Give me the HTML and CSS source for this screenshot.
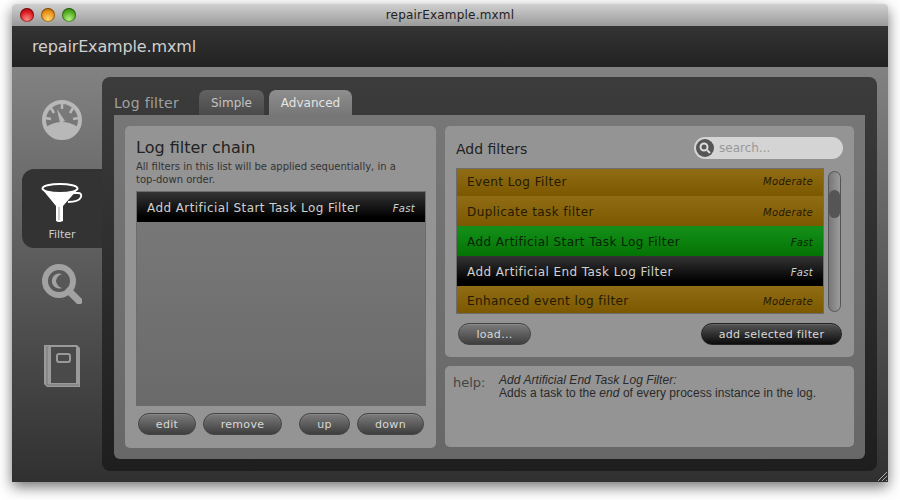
FILE: index.html
```html
<!DOCTYPE html>
<html lang="en">
<head>
    <meta charset="UTF-8">
    <title>repairExample.mxml</title>
    <link rel="stylesheet" href="styles.css">
</head>
<body>
    <div class="window">
        <div class="titlebar">
            <div class="lights">
                <span class="light red"></span>
                <span class="light orange"></span>
                <span class="light green"></span>
            </div>
            <div class="window-title">repairExample.mxml</div>
        </div>
        <div class="header">repairExample.mxml</div>
        <div class="main">
            <div class="sidebar">
                <div class="nav-item nav-gauge">
                    <svg width="40" height="40" viewBox="0 0 40 40">
                        <circle cx="20" cy="20" r="18" fill="none" stroke="#b8b8b8" stroke-width="4"/>
                        <path d="M4 27 Q20 17 36 27 Q31 38 20 38 Q9 38 4 27Z" fill="#b8b8b8"/>
                        <path d="M20 3V9M9 8l3 5M31 8l-3 5M3 18l6 1M37 18l-6 1" stroke="#b8b8b8" stroke-width="2.5"/>
                        <path d="M15 9 L23 21 L18 23Z" fill="#b8b8b8"/>
                    </svg>
                </div>
                <div class="nav-item nav-filter">
                    <svg width="42" height="40" viewBox="0 0 42 40">
                        <path d="M30 10 H37 Q41 10 40 14 Q38 19 27 19" fill="none" stroke="#fff" stroke-width="2"/>
                        <path d="M1 6 L15 23 V38 Q18 40 22 38 V23 L37 6 Q18 14 1 6Z" fill="#fff"/>
                        <ellipse cx="19" cy="5.500" rx="17.500" ry="4.500" fill="#333" stroke="#fff" stroke-width="2"/>
                        <path d="M18 24V37" stroke="#bbb" stroke-width="1.500"/>
                    </svg>
                    <span class="nav-label">Filter</span>
                </div>
                <div class="nav-item nav-search">
                    <svg width="40" height="40" viewBox="0 0 40 40">
                        <circle cx="17" cy="17" r="14" fill="none" stroke="#a2a2a2" stroke-width="6"/>
                        <path d="M20 10 A7.500 7.500 0 1 0 20 24 A9 9 0 0 1 14 17 A9 9 0 0 1 20 10Z" fill="#a2a2a2"/>
                        <path d="M27 27 L37 37" stroke="#a2a2a2" stroke-width="7" stroke-linecap="round"/>
                    </svg>
                </div>
                <div class="nav-item nav-book">
                    <svg width="36" height="42" viewBox="0 0 36 42">
                        <path d="M0 0 H33 L36 3 V42 H3 L0 39Z" fill="#9a9a9a"/>
                        <rect x="7" y="2" width="25" height="36" fill="#4a4a4a"/>
                        <path d="M3 1V40H35" fill="none" stroke="#777" stroke-width="1"/>
                        <rect x="13" y="9" width="13" height="8" rx="2" fill="#4a4a4a" stroke="#9a9a9a" stroke-width="2"/>
                    </svg>
                </div>
            </div>
            <div class="panel">
                <div class="tabs">
                    <span class="tabs-label">Log filter</span>
                    <span class="tab tab-simple">Simple</span>
                    <span class="tab tab-active">Advanced</span>
                </div>
                <div class="tab-content">
                    <div class="card chain-card">
                        <h2>Log filter chain</h2>
                        <p class="sub">All filters in this list will be applied sequentially, in a top-down order.</p>
                        <div class="list chain-list">
                            <div class="row row-black"><span>Add Artificial Start Task Log Filter</span><em>Fast</em></div>
                        </div>
                        <div class="buttons chain-buttons">
                            <button class="btn btn-edit">edit</button>
                            <button class="btn btn-remove">remove</button>
                            <button class="btn btn-up">up</button>
                            <button class="btn btn-down">down</button>
                        </div>
                    </div>
                    <div class="right-col">
                        <div class="card add-card">
                            <div class="add-head">
                                <h3>Add filters</h3>
                                <div class="search">
                                    <span class="search-icon">
                                        <svg width="14" height="14" viewBox="0 0 14 14">
                                            <circle cx="6" cy="6" r="3.500" fill="none" stroke="#ddd" stroke-width="2"/>
                                            <path d="M9 9l3 3" stroke="#ddd" stroke-width="2"/>
                                        </svg>
                                    </span>
                                    <span class="search-text">search...</span>
                                </div>
                            </div>
                            <div class="add-body">
                                <div class="list add-list">
                                    <div class="row row-amber row-first"><span>Event Log Filter</span><em>Moderate</em></div>
                                    <div class="row row-amber"><span>Duplicate task filter</span><em>Moderate</em></div>
                                    <div class="row row-green"><span>Add Artificial Start Task Log Filter</span><em>Fast</em></div>
                                    <div class="row row-black"><span>Add Artificial End Task Log Filter</span><em>Fast</em></div>
                                    <div class="row row-amber row-last"><span>Enhanced event log filter</span><em>Moderate</em></div>
                                </div>
                                <div class="scrollbar"><div class="thumb"></div></div>
                            </div>
                            <div class="buttons add-buttons">
                                <button class="btn btn-load">load...</button>
                                <button class="btn btn-add">add selected filter</button>
                            </div>
                        </div>
                        <div class="card help-card">
                            <span class="help-label">help:</span>
                            <div class="help-text">
                                <i>Add Artificial End Task Log Filter:</i><br>
                                Adds a task to the <i>end</i> of every process instance in the log.
                            </div>
                        </div>
                    </div>
                </div>
            </div>
        </div>
        <svg class="grip" width="12" height="12" viewBox="0 0 12 12">
            <path d="M2 11L11 2M6 11L11 6M10 11L11 10" stroke="#aaa" stroke-width="1"/>
        </svg>
    </div>
</body>
</html>
```

FILE: styles.css
```css
html, body {
    height: 100%;
}
body {
    margin: 0;
    padding: 4px 12px 0;
    box-sizing: border-box;
    background-color: #fff;
    font-family: "DejaVu Sans", sans-serif;
    overflow: hidden;
}
.window {
    position: relative;
    width: 876px;
    height: 478px;
    display: flex;
    flex-direction: column;
    border-radius: 4px 4px 0 0;
    box-shadow: 0 5px 14px rgba(0,0,0,0.55);
}
.titlebar {
    height: 22px;
    display: flex;
    align-items: center;
    position: relative;
    background: linear-gradient(#d0d0d0, #9a9a9a);
    border-radius: 4px 4px 0 0;
    flex-shrink: 0;
}
.lights {
    display: flex;
    gap: 7px;
    padding-left: 8px;
}
.light {
    width: 14px;
    height: 14px;
    border-radius: 50%;
    box-shadow: inset 0 0 0 1px rgba(0,0,0,0.35);
}
.red {
    background: radial-gradient(circle at 50% 80%, #ff8a80, #d8141c 60%, #8a0a10);
}
.orange {
    background: radial-gradient(circle at 50% 80%, #ffd870, #e88c14 60%, #96580a);
}
.green {
    background: radial-gradient(circle at 50% 80%, #b4f080, #4ea81e 60%, #2c6e10);
}
.window-title {
    position: absolute;
    left: 0;
    right: 0;
    text-align: center;
    font-size: 12px;
    letter-spacing: 0.2px;
    color: #222;
}
.header {
    height: 41px;
    box-sizing: border-box;
    padding: 0 20px;
    display: flex;
    align-items: center;
    font-size: 16px;
    letter-spacing: -0.15px;
    color: #cfcfcf;
    background: linear-gradient(#343434, #222);
    flex-shrink: 0;
}
.main {
    flex: 1;
    display: flex;
    padding: 10px 11px 11px 0;
    background: linear-gradient(#828282, #303030);
    min-height: 0;
}
.sidebar {
    width: 90px;
    flex-shrink: 0;
    display: flex;
    flex-direction: column;
    align-items: flex-end;
}
.nav-item {
    display: flex;
    flex-direction: column;
    align-items: center;
    width: 80px;
}
.nav-item svg {
    display: block;
}
.nav-gauge {
    margin-top: 23px;
}
.nav-filter {
    margin-top: 29px;
    height: 79px;
    box-sizing: border-box;
    padding-top: 14px;
    background-color: #333;
    border-radius: 12px 0 0 12px;
}
.nav-label {
    font-size: 11px;
    color: #ccc;
    margin-top: 5px;
}
.nav-search {
    margin-top: 16px;
}
.nav-book {
    margin-top: 41px;
}
.panel {
    flex: 1;
    display: flex;
    flex-direction: column;
    padding: 0 12px 12px;
    background: linear-gradient(#3c3c3c, #1e1e1e);
    border-radius: 8px;
}
.tabs {
    height: 38px;
    display: flex;
    align-items: flex-end;
    flex-shrink: 0;
}
.tabs-label {
    width: 85px;
    font-size: 14px;
    letter-spacing: 0.3px;
    line-height: 26px;
    height: 25px;
    color: #a0a0a0;
}
.tab {
    height: 25px;
    line-height: 26px;
    text-align: center;
    font-size: 12px;
    border-radius: 7px 7px 0 0;
}
.tab-simple {
    width: 65px;
    margin-right: 5px;
    color: #c4c4c4;
    background: linear-gradient(#626262, #4a4a4a);
}
.tab-active {
    width: 83px;
    color: #e4e4e4;
    background: linear-gradient(#8e8e8e, #777);
}
.tab-content {
    flex: 1;
    display: flex;
    gap: 9px;
    padding: 11px;
    background: linear-gradient(#777, #676767);
    border-radius: 0 0 6px 6px;
}
.card {
    box-sizing: border-box;
    background-color: #949494;
    border-radius: 5px;
}
.chain-card {
    width: 311px;
    padding: 12px 10px 13px 11px;
    display: flex;
    flex-direction: column;
}
h2 {
    margin: 0;
    font-size: 16px;
    font-weight: normal;
    line-height: 20px;
    color: #222;
}
.sub {
    margin: 2px 0 5px;
    max-width: 265px;
    font-size: 10px;
    line-height: 13px;
    color: #333;
}
.list {
    box-sizing: border-box;
    border: 1px solid #6c6c6c;
    background: linear-gradient(#7a7a7a, #6a6a6a);
}
.chain-list {
    flex: 1;
}
.row {
    height: 30px;
    box-sizing: border-box;
    padding: 2px 10px 0;
    display: flex;
    align-items: center;
    justify-content: space-between;
    font-size: 12px;
    letter-spacing: 0.42px;
}
.row em {
    font-size: 10px;
    letter-spacing: 0.3px;
}
.row-black {
    color: #d0d0d0;
    background: linear-gradient(#343434, #000 85%);
}
.row-amber {
    color: #241a02;
    background: linear-gradient(#906c14, #7c5800);
}
.row-green {
    color: #082406;
    background: linear-gradient(#14901a, #047404);
}
.row-first {
    height: 27px;
    padding: 0 10px 2px;
}
.row-last {
    height: 27px;
    padding-top: 3px;
}
.buttons {
    display: flex;
}
.btn {
    height: 22px;
    padding: 0;
    border: 1px solid #444;
    border-radius: 11px;
    font-family: "DejaVu Sans", sans-serif;
    font-size: 11px;
    letter-spacing: 0.3px;
    color: #d8d8d8;
    background: linear-gradient(#7c7c7c, #3e3e3e);
    box-shadow: inset 0 1px 0 rgba(255,255,255,0.1);
}
.chain-buttons {
    padding: 7px 2px 0 2px;
}
.btn-edit {
    width: 58px;
    margin-right: 7px;
}
.btn-remove {
    width: 79px;
    margin-right: 17px;
}
.btn-up {
    width: 51px;
    margin-right: 7px;
}
.btn-down {
    width: 67px;
}
.right-col {
    width: 409px;
    display: flex;
    flex-direction: column;
    gap: 9px;
}
.add-card {
    height: 231px;
    padding: 11px 11px 0;
}
.add-head {
    display: flex;
    align-items: center;
    justify-content: space-between;
    height: 22px;
    margin-bottom: 9px;
}
h3 {
    margin: 2px 0 0;
    font-size: 14px;
    font-weight: normal;
    color: #222;
}
.search {
    width: 149px;
    height: 22px;
    display: flex;
    align-items: center;
    gap: 5px;
    border-radius: 11px;
    background-color: #d4d4d4;
    font-size: 12px;
    color: #999;
    padding-left: 2px;
    box-sizing: border-box;
}
.search-icon {
    width: 18px;
    height: 18px;
    border-radius: 50%;
    background-color: #555;
    display: flex;
    align-items: center;
    justify-content: center;
}
.add-body {
    display: flex;
    gap: 4px;
    height: 146px;
}
.add-list {
    width: 368px;
}
.scrollbar {
    width: 13px;
    height: 141px;
    margin-top: 3px;
    box-sizing: border-box;
    border: 1px solid #555;
    border-radius: 7px;
    background: linear-gradient(90deg, #777, #9c9c9c);
}
.thumb {
    width: 11px;
    height: 28px;
    margin-top: 18px;
    border-radius: 6px;
    background-color: #555;
}
.add-buttons {
    justify-content: space-between;
    padding: 9px 1px 0 2px;
}
.btn-load {
    width: 73px;
}
.btn-add {
    width: 141px;
    background: linear-gradient(#555, #0c0c0c);
    border-color: #222;
}
.help-card {
    height: 81px;
    padding: 8px;
    display: flex;
}
.help-label {
    width: 46px;
    font-size: 13px;
    margin-top: 1px;
    color: #444;
}
.help-text {
    font-family: "Liberation Sans", sans-serif;
    font-size: 12px;
    letter-spacing: 0.05px;
    line-height: 13px;
    color: #2a2a2a;
}
.grip {
    position: absolute;
    right: 0;
    bottom: 0;
}
```
